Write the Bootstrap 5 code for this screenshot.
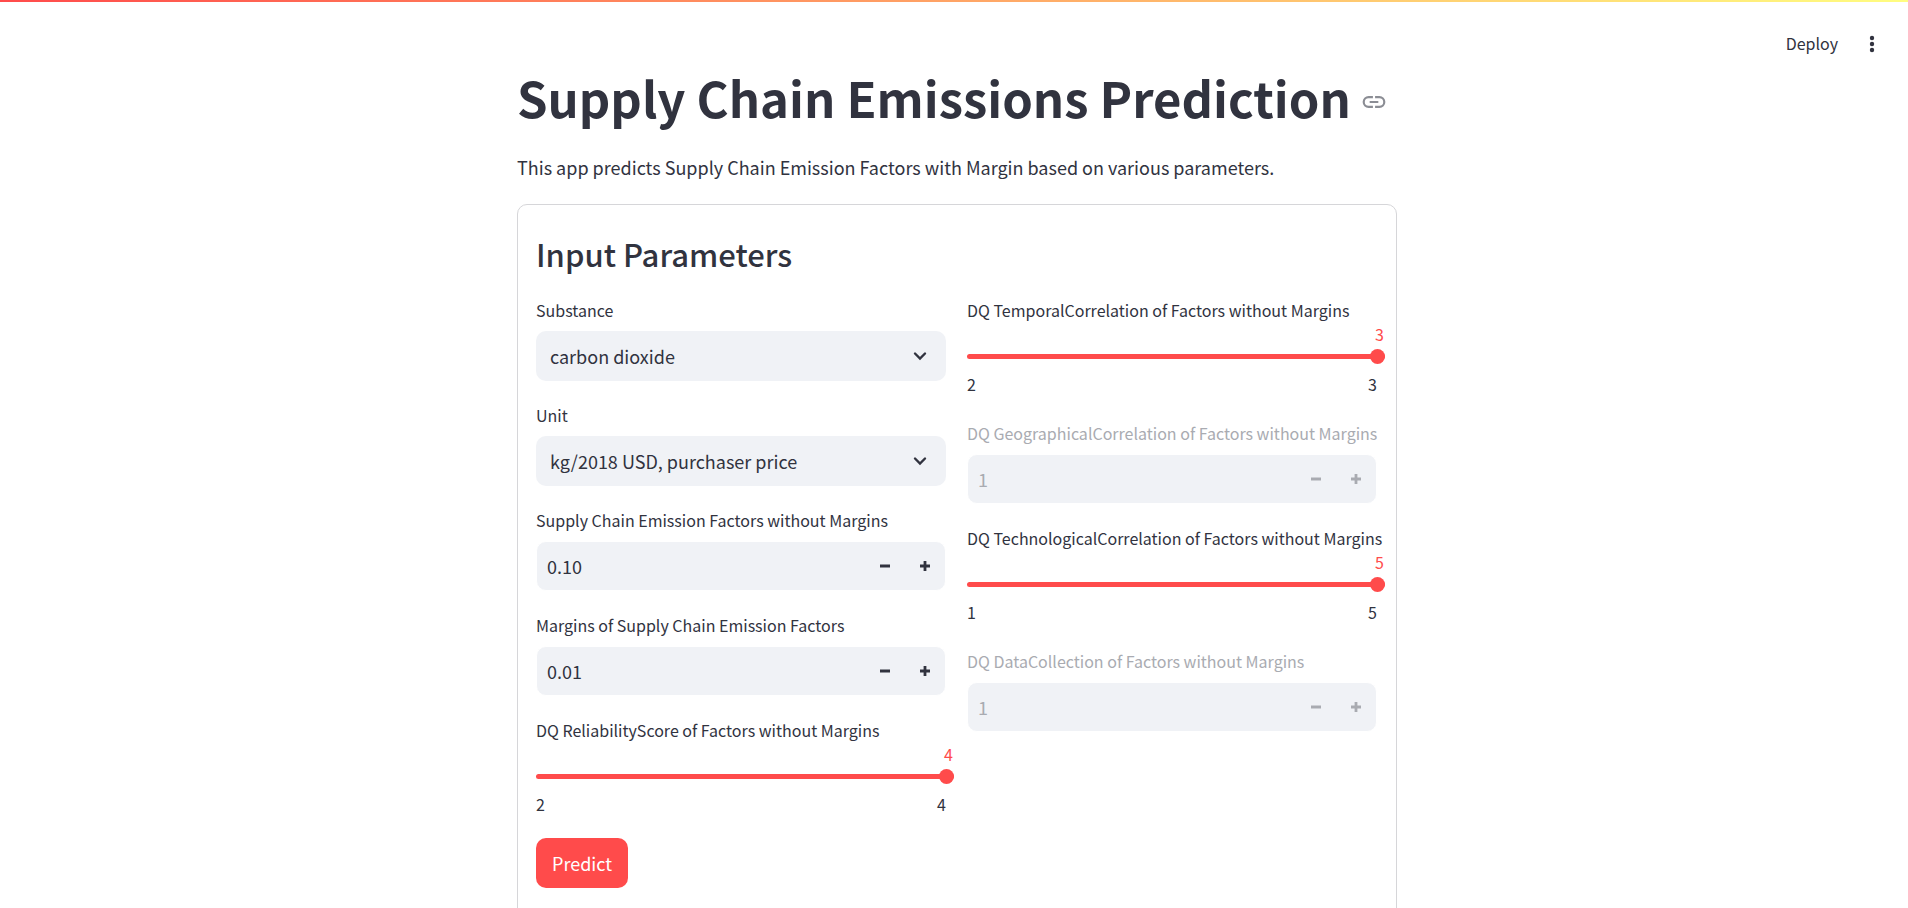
<!DOCTYPE html>
<html lang="en">
<head>
<meta charset="utf-8">
<meta name="viewport" content="width=device-width, initial-scale=1">
<title>Supply Chain Emissions Prediction</title>
<link href="https://cdn.jsdelivr.net/npm/bootstrap@5.3.0/dist/css/bootstrap.min.css" rel="stylesheet">
<style>
  :root { --ink: #31333f; --accent: #ff4b4b; --field: #f0f2f6; --faded: #a9abb1; }
  body { font-family: "Noto Sans CJK SC", "Noto Sans", sans-serif; font-size: 18px; line-height: 30px; color: var(--ink); background: #fff; }
  .top-line { height: 2px; background: linear-gradient(90deg, #ff4b4b, #fffd80); }
  .app-header { height: 62px; padding: 29px 26px 0 0; }
  .app-header button { color: var(--ink); font-size: 16px; line-height: 24px; }
  .app-main { padding-left: 6px; }
  .app-block { max-width: 880px; }
  .app-title { font-size: 49px; font-weight: 700; line-height: 66px; color: var(--ink); }
  .app-title a { margin: 10px 0 0 10px; }
  .app-intro { margin: 22px 0; }
  .app-form { border: 1px solid #d6d6d9; border-radius: 10px; padding: 20px 19px 60px 18px; }
  .form-heading { font-size: 31px; font-weight: 500; line-height: 40px; margin: 9px 0 21px; color: var(--ink); }
  .columns { gap: 21px; margin-bottom: 19px; }
  .columns > .col { gap: 19px; flex: 1 1 0; min-width: 0; }
  .field-label { font-size: 16px; line-height: 30px; margin: 0 0 6px; display: block; white-space: nowrap; }
  .form-select { height: 50px; padding: 0 50px 0 14px; border: 0; border-radius: 10px; font-size: 18px; line-height: 50px; color: var(--ink); background-color: var(--field); background-position: right 18px center; background-size: 16px 16px;
    background-image: url("data:image/svg+xml,%3Csvg xmlns='http://www.w3.org/2000/svg' viewBox='0 0 16 16'%3E%3Cpath d='M3 5.5l5 5 5-5' fill='none' stroke='%2331333f' stroke-width='2.4' stroke-linecap='round'/%3E%3C/svg%3E"); }
  .stepper { background: var(--field); border: 1px solid #fff; border-radius: 10px; height: 50px; overflow: hidden; }
  .stepper input { min-width: 0; background: transparent; border: 0; padding: 0 10px; font-size: 18px; color: var(--ink); appearance: textfield; -moz-appearance: textfield; }
  .stepper input::-webkit-inner-spin-button { appearance: none; -webkit-appearance: none; margin: 0; }
  .stepper button { width: 40px; border: 0; padding: 0; background: transparent; color: var(--ink); display: flex; align-items: center; justify-content: center; }
  .is-off .field-label, .is-off input, .is-off button { color: var(--faded); -webkit-text-fill-color: currentColor; opacity: 1; }
  .slider .field-label { margin: 0; }
  .slider output { display: block; font-size: 16px; line-height: 18px; text-align: right; margin-right: -7px; color: var(--accent); }
  .slider input { display: block; width: calc(100% + 8px); height: 15px; margin: 6px 0; appearance: none; -webkit-appearance: none; background: none; }
  .slider input::-webkit-slider-runnable-track { height: 5px; border-radius: 5px; background: var(--accent); }
  .slider input::-webkit-slider-thumb { -webkit-appearance: none; width: 15px; height: 15px; margin-top: -5px; border-radius: 50%; background: var(--accent); }
  .ticks { font-size: 16px; line-height: 29px; }
  .btn-predict { height: 50px; padding: 0 16px; border: 0; border-radius: 10px; font-size: 18px; color: #fff; background: var(--accent); }
</style>
</head>
<body>
<svg class="d-none">
  <symbol id="minus" viewBox="0 0 10 10"><path d="M0 3.6h10v2.8H0z" fill="currentColor"/></symbol>
  <symbol id="plus" viewBox="0 0 10 10"><path d="M3.6 0h2.8v3.6H10v2.8H6.4V10H3.6V6.4H0V3.6h3.6z" fill="currentColor"/></symbol>
</svg>
<div class="top-line"></div>
<header class="app-header d-flex justify-content-end align-items-start gap-4">
  <button type="button" class="btn border-0 p-0">Deploy</button>
  <button type="button" class="btn border-0 p-0 d-flex" aria-label="Main menu">
    <svg width="20" height="26" viewBox="0 0 20 26" fill="currentColor"><circle cx="10" cy="7" r="2.2"/><circle cx="10" cy="13" r="2.2"/><circle cx="10" cy="19" r="2.2"/></svg>
  </button>
</header>
<main class="app-main">
  <div class="app-block mx-auto">
    <h1 class="app-title d-flex align-items-center mb-0">Supply Chain Emissions Prediction
      <a href="#" class="d-flex" aria-label="Link to heading">
        <svg width="26" height="26" viewBox="0 0 24 24" fill="none" stroke="#8b8d94" stroke-width="2"><path d="M11 7.5H7a4.5 4.5 0 0 0 0 9h4M13 7.5h4a4.5 4.5 0 0 1 0 9h-4M8 12h8"/></svg>
      </a>
    </h1>
    <p class="app-intro">This app predicts Supply Chain Emission Factors with Margin based on various parameters.</p>
    <form class="app-form">
      <h2 class="form-heading">Input Parameters</h2>
      <div class="row mx-0 flex-nowrap columns">
        <div class="col p-0 d-flex flex-column">
          <div class="field">
            <label class="field-label" for="substance">Substance</label>
            <select class="form-select" id="substance"><option>carbon dioxide</option></select>
          </div>
          <div class="field">
            <label class="field-label" for="unit">Unit</label>
            <select class="form-select" id="unit"><option>kg/2018 USD, purchaser price</option></select>
          </div>
          <div class="field">
            <label class="field-label" for="factors">Supply Chain Emission Factors without Margins</label>
            <div class="stepper d-flex">
              <input class="flex-grow-1" type="number" id="factors" step="0.01" value="0.10">
              <button type="button" aria-label="Decrease"><svg width="10" height="10"><use href="#minus"/></svg></button>
              <button type="button" aria-label="Increase"><svg width="10" height="10"><use href="#plus"/></svg></button>
            </div>
          </div>
          <div class="field">
            <label class="field-label" for="margins">Margins of Supply Chain Emission Factors</label>
            <div class="stepper d-flex">
              <input class="flex-grow-1" type="number" id="margins" step="0.01" value="0.01">
              <button type="button" aria-label="Decrease"><svg width="10" height="10"><use href="#minus"/></svg></button>
              <button type="button" aria-label="Increase"><svg width="10" height="10"><use href="#plus"/></svg></button>
            </div>
          </div>
          <div class="slider">
            <label class="field-label" for="reliability">DQ ReliabilityScore of Factors without Margins</label>
            <output for="reliability">4</output>
            <input type="range" id="reliability" min="2" max="4" value="4">
            <div class="ticks d-flex justify-content-between"><span>2</span><span>4</span></div>
          </div>
        </div>
        <div class="col p-0 d-flex flex-column">
          <div class="slider">
            <label class="field-label" for="temporal">DQ TemporalCorrelation of Factors without Margins</label>
            <output for="temporal">3</output>
            <input type="range" id="temporal" min="2" max="3" value="3">
            <div class="ticks d-flex justify-content-between"><span>2</span><span>3</span></div>
          </div>
          <div class="field is-off">
            <label class="field-label" for="geographical">DQ GeographicalCorrelation of Factors without Margins</label>
            <div class="stepper d-flex">
              <input class="flex-grow-1" type="number" id="geographical" value="1" disabled>
              <button type="button" aria-label="Decrease" disabled><svg width="10" height="10"><use href="#minus"/></svg></button>
              <button type="button" aria-label="Increase" disabled><svg width="10" height="10"><use href="#plus"/></svg></button>
            </div>
          </div>
          <div class="slider">
            <label class="field-label" for="technological">DQ TechnologicalCorrelation of Factors without Margins</label>
            <output for="technological">5</output>
            <input type="range" id="technological" min="1" max="5" value="5">
            <div class="ticks d-flex justify-content-between"><span>1</span><span>5</span></div>
          </div>
          <div class="field is-off">
            <label class="field-label" for="collection">DQ DataCollection of Factors without Margins</label>
            <div class="stepper d-flex">
              <input class="flex-grow-1" type="number" id="collection" value="1" disabled>
              <button type="button" aria-label="Decrease" disabled><svg width="10" height="10"><use href="#minus"/></svg></button>
              <button type="button" aria-label="Increase" disabled><svg width="10" height="10"><use href="#plus"/></svg></button>
            </div>
          </div>
        </div>
      </div>
      <button type="submit" class="btn btn-predict">Predict</button>
    </form>
  </div>
</main>
<script src="https://cdn.jsdelivr.net/npm/bootstrap@5.3.0/dist/js/bootstrap.bundle.min.js"></script>
</body>
</html>
